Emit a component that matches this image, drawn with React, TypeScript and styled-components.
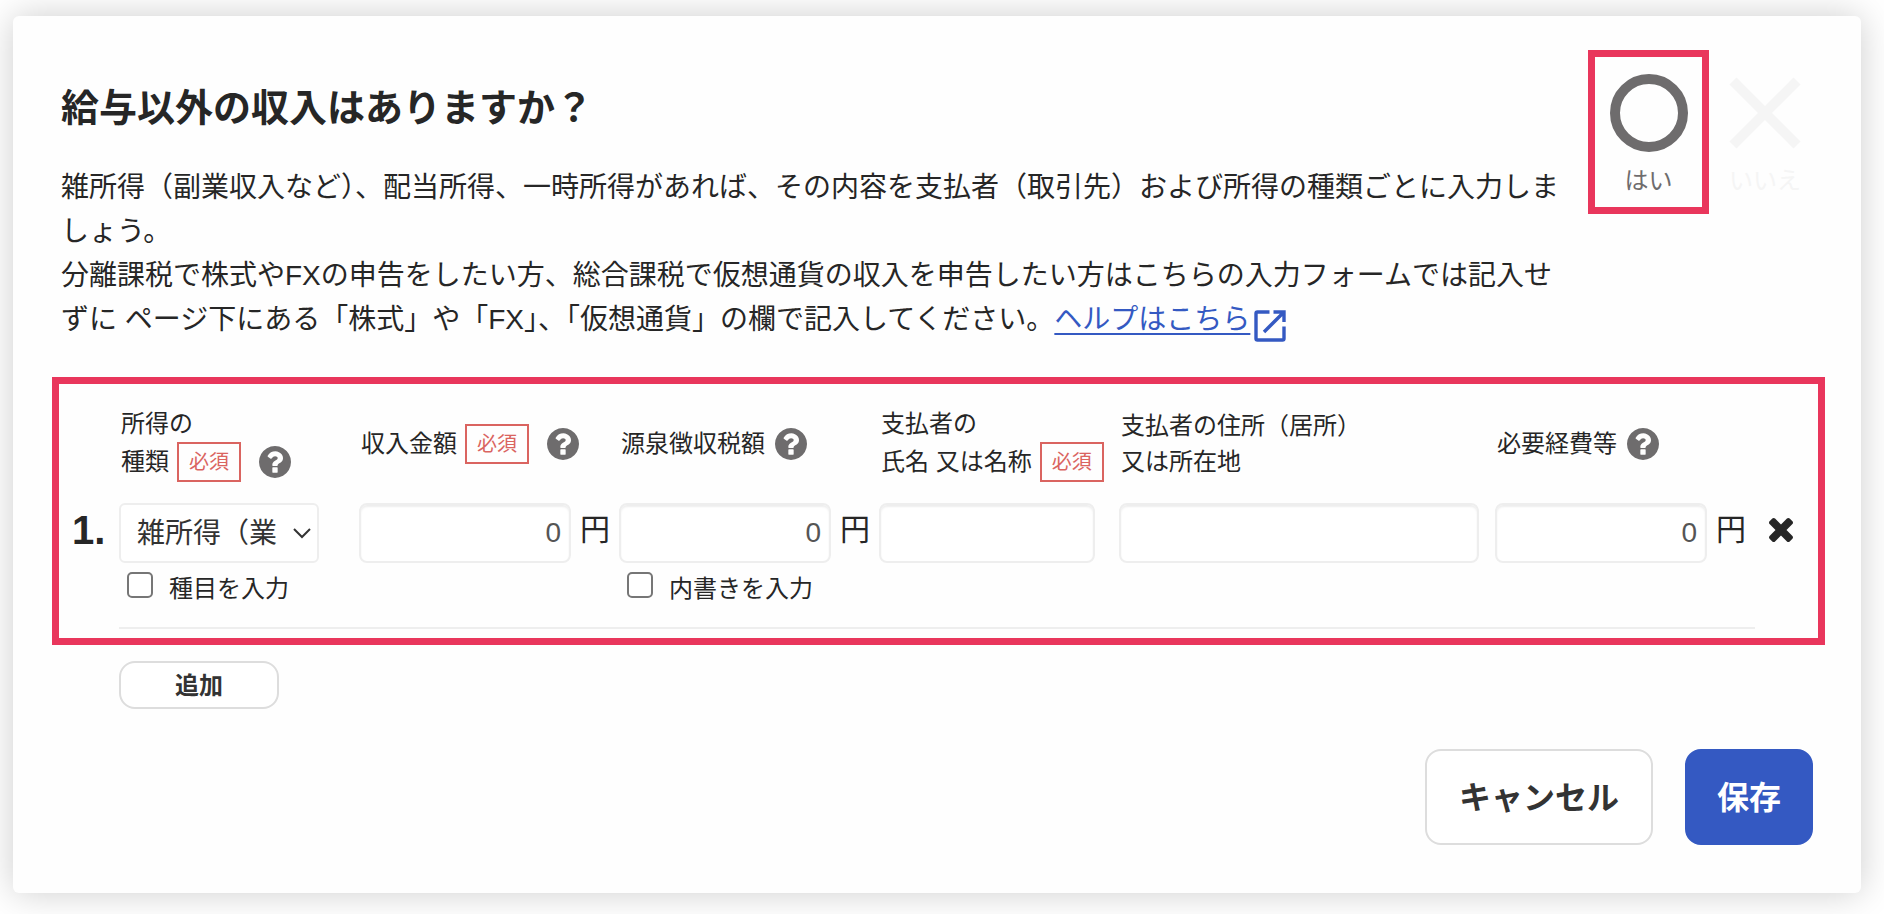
import React, { useState } from "react";
import styled, { createGlobalStyle, css } from "styled-components";

const color = {
  text: "#262626",
  control: "#333333",
  value: "#555555",
  muted: "#6e6c6d",
  faint: "#f5f5f5",
  line: "#eeeeee",
  buttonLine: "#dddddd",
  primary: "#3459c2",
  required: "#da6460",
  highlight: "#e9365c",
};

const fontStack = `"Liberation Sans", "Noto Sans CJK JP", sans-serif`;

const GlobalStyle = createGlobalStyle`
  *, *::before, *::after { box-sizing: border-box; }
  body {
    margin: 0;
    background: #ffffff;
    color: ${color.text};
    font-family: ${fontStack};
  }
  button, input, select { font-family: inherit; }
`;

const Page = styled.main`
  padding: 16px 23px 22px 13px;
`;

const Card = styled.form`
  padding: 34px 36px 48px 39px;
  border-radius: 6px;
  background: #fefefe;
  box-shadow: 0 0 36px rgba(0, 0, 0, 0.2);
`;

const Header = styled.header`
  display: flex;
  align-items: flex-start;
  padding-left: 9px;
`;

const Intro = styled.div`
  flex: 1;
  min-width: 0;
  padding-top: 34px;
  margin-right: 24px;
`;

const Title = styled.h1`
  margin: 0 0 34px;
  font-size: 38px;
  line-height: 48px;
  font-weight: 700;
`;

const Description = styled.p`
  margin: 0;
  font-size: 28px;
  line-height: 44px;
`;

const HelpLink = styled.a`
  color: ${color.primary};
  text-decoration-thickness: 2px;
  text-underline-offset: 4px;
`;

const ExternalIcon = styled.svg`
  width: 32px;
  height: 32px;
  margin-left: 4px;
  vertical-align: bottom;
`;

const Choices = styled.div`
  display: flex;
  margin-right: 4px;
`;

const Choice = styled.button<{ $active: boolean }>`
  display: flex;
  flex-direction: column;
  align-items: center;
  gap: 11px;
  width: ${(p) => (p.$active ? 121 : 112)}px;
  height: 164px;
  padding: 17px 0 8px;
  border: solid ${(p) => (p.$active ? color.highlight : "transparent")};
  border-width: ${(p) => (p.$active ? "7px" : "7px 0")};
  background: none;
  color: ${(p) => (p.$active ? color.muted : color.faint)};
  font-size: 24px;
  line-height: 36px;
  cursor: pointer;

  svg {
    width: 78px;
    height: 78px;
    fill: none;
    stroke: currentColor;
    stroke-width: 10;
  }
`;

const Entries = styled.section`
  margin-top: 35px;
  padding: 22px 0 9px;
  border: 7px solid ${color.highlight};
`;

const columns = css`
  display: grid;
  grid-template-columns: 60px 240px 260px 260px 240px minmax(0, 1fr) 260px 63px;
`;

const HeadRow = styled.div`
  ${columns}
  align-items: center;
  min-height: 76px;
  margin-bottom: 21px;
`;

const FieldRow = styled.div`
  ${columns}
  align-items: start;
`;

const HeadCell = styled.div`
  padding-left: 2px;
  font-size: 24px;
  line-height: 36px;
  white-space: nowrap;
`;

const HeadLine = styled.div`
  display: flex;
  align-items: center;
`;

const Required = styled.span`
  width: 64px;
  height: 40px;
  margin-left: 8px;
  border: 2px solid ${color.required};
  color: ${color.required};
  font-size: 20px;
  line-height: 36px;
  text-align: center;
`;

const HelpButton = styled.button<{ $gap: number }>`
  display: flex;
  margin-left: ${(p) => p.$gap}px;
  padding: 0;
  border: 0;
  background: none;
  color: ${color.muted};
  cursor: pointer;

  svg {
    width: 32px;
    height: 32px;
    fill: currentColor;
  }
`;

const RowNumber = styled.strong`
  padding-left: 13px;
  font-size: 40px;
  line-height: 54px;
`;

const FieldCell = styled.div`
  display: flex;
  flex-direction: column;
  gap: 8px;
`;

const FieldLine = styled.div`
  display: flex;
  align-items: flex-start;
`;

const SelectWrap = styled.div`
  position: relative;
  width: 200px;

  svg {
    position: absolute;
    top: 22px;
    right: 8px;
    width: 18px;
    height: 16px;
    fill: none;
    stroke: ${color.control};
    stroke-width: 2;
    pointer-events: none;
  }
`;

const Select = styled.select`
  width: 100%;
  height: 60px;
  padding: 0 36px 0 16px;
  border: 2px solid ${color.line};
  border-radius: 6px;
  background: #ffffff;
  color: ${color.control};
  font-size: 28px;
  appearance: none;
`;

const TextInput = styled.input<{ $width: string }>`
  width: ${(p) => p.$width};
  height: 60px;
  padding: 0 8px;
  border: 2px solid ${color.line};
  border-radius: 8px;
  background: #ffffff;
  box-shadow: inset 0 2px 2px ${color.line};
  color: ${color.value};
  font-size: 28px;
  outline: none;
`;

const AmountInput = styled(TextInput)`
  text-align: right;
`;

const Unit = styled.span`
  margin-left: 9px;
  font-size: 30px;
  line-height: 54px;
`;

const CheckLabel = styled.label`
  display: flex;
  align-items: center;
  gap: 16px;
  padding-left: 8px;
  font-size: 24px;
  line-height: 36px;
`;

const Checkbox = styled.input`
  appearance: none;
  width: 26px;
  height: 26px;
  margin: 0 0 8px;
  border: 2px solid #767676;
  border-radius: 5px;
  background: #ffffff;

  &:checked {
    background: ${color.primary};
  }
`;

const RemoveButton = styled.button`
  display: flex;
  align-items: center;
  height: 54px;
  padding: 0 0 0 14px;
  border: 0;
  background: none;
  color: ${color.text};
  cursor: pointer;

  svg {
    width: 24px;
    height: 24px;
    fill: currentColor;
  }
`;

const Divider = styled.hr`
  height: 2px;
  margin: 20px 63px 0 60px;
  border: 0;
  background: ${color.line};
`;

const Button = styled.button<{ $size: "small" | "large"; $primary?: boolean }>`
  height: ${(p) => (p.$size === "large" ? 96 : 48)}px;
  min-width: ${(p) => (p.$size === "large" ? 128 : 160)}px;
  padding: 0 ${(p) => (p.$size === "large" && !p.$primary ? 32 : 16)}px 4px;
  border: 2px solid ${(p) => (p.$primary ? color.primary : color.buttonLine)};
  border-radius: 16px;
  background: ${(p) => (p.$primary ? color.primary : "#ffffff")};
  color: ${(p) => (p.$primary ? "#ffffff" : color.control)};
  font-size: ${(p) => (p.$size === "large" ? 32 : 24)}px;
  font-weight: 700;
  cursor: pointer;
`;

const AddBar = styled.div`
  padding: 16px 0 0 67px;
`;

const Footer = styled.footer`
  display: flex;
  justify-content: flex-end;
  gap: 32px;
  margin-top: 40px;
  padding-right: 12px;
`;

const Help = ({ about, gap = 10 }: { about: string; gap?: number }) => (
  <HelpButton type="button" aria-label={about} $gap={gap}>
    <svg viewBox="128 128 1536 1536" aria-hidden="true">
      <path d="M1024 1376v-192q0-14-9-23t-23-9h-192q-14 0-23 9t-9 23v192q0 14 9 23t23 9h192q14 0 23-9t9-23zM1280 704q0-88-55.5-163t-138.5-116-170-41q-243 0-371 213-15 24 8 42l132 100q7 6 19 6 16 0 25-12 53-68 86-92 34-24 86-24 48 0 85.5 26t37.5 59q0 38-20 61t-68 45q-63 28-115.5 86.5t-52.5 125.5v36q0 14 9 23t23 9h192q14 0 23-9t9-23q0-19 21.5-49.5t54.5-49.5q32-18 49-28.5t46-35 44.5-48 28-60.5 12.5-81zM1664 896q0 209-103 385.5t-279.5 279.5-385.5 103-385.5-103-279.5-279.5-103-385.5 103-385.5 279.5-279.5 385.5-103 385.5 103 279.5 279.5 103 385.5z" />
    </svg>
  </HelpButton>
);

export default function App() {
  const [hasIncome, setHasIncome] = useState(true);

  return (
    <>
      <GlobalStyle />
      <Page>
        <Card onSubmit={(e) => e.preventDefault()}>
          <Header>
            <Intro>
              <Title>給与以外の収入はありますか？</Title>
              <Description lang="ja">
                雑所得（副業収入など）、配当所得、一時所得があれば、その内容を支払者（取引先）および所得の種類ごとに入力しましょう。
                <br />
                分離課税で株式やFXの申告をしたい方、総合課税で仮想通貨の収入を申告したい方はこちらの入力フォームでは記入せずに
                {" "}ページ下にある「株式」や「FX」、「仮想通貨」の欄で記入してください。
                <HelpLink href="#help">ヘルプはこちら</HelpLink>
                <ExternalIcon viewBox="0 0 32 32" aria-hidden="true" fill="none" stroke={color.primary} strokeWidth="3.4">
                  <path d="M15.500 2H3.500Q2 2 2 3.500V28.500Q2 30 3.500 30H28.500Q30 30 30 28.500V16.500" />
                  <path d="M19.500 2H30V12M29.500 2.500L10 22" />
                </ExternalIcon>
              </Description>
            </Intro>
            <Choices>
              <Choice type="button" $active={hasIncome} aria-pressed={hasIncome} onClick={() => setHasIncome(true)}>
                <svg viewBox="0 0 78 78" aria-hidden="true">
                  <circle cx="39" cy="39" r="34" />
                </svg>
                はい
              </Choice>
              <Choice type="button" $active={!hasIncome} aria-pressed={!hasIncome} onClick={() => setHasIncome(false)}>
                <svg viewBox="0 0 78 78" aria-hidden="true">
                  <path d="M7 7L71 71M71 7L7 71" />
                </svg>
                いいえ
              </Choice>
            </Choices>
          </Header>

          <Entries>
            <HeadRow>
              <span />
              <HeadCell>
                <label htmlFor="kind">所得の</label>
                <HeadLine>
                  <label htmlFor="kind">種類</label>
                  <Required>必須</Required>
                  <Help about="所得の種類" gap={18} />
                </HeadLine>
              </HeadCell>
              <HeadCell>
                <HeadLine>
                  <label htmlFor="amount">収入金額</label>
                  <Required>必須</Required>
                  <Help about="収入金額" gap={18} />
                </HeadLine>
              </HeadCell>
              <HeadCell>
                <HeadLine>
                  <label htmlFor="tax">源泉徴収税額</label>
                  <Help about="源泉徴収税額" />
                </HeadLine>
              </HeadCell>
              <HeadCell>
                <label htmlFor="payer">支払者の</label>
                <HeadLine>
                  <label htmlFor="payer">氏名 又は名称</label>
                  <Required>必須</Required>
                </HeadLine>
              </HeadCell>
              <HeadCell>
                <label htmlFor="address">
                  支払者の住所（居所）
                  <br />
                  又は所在地
                </label>
              </HeadCell>
              <HeadCell>
                <HeadLine>
                  <label htmlFor="expense">必要経費等</label>
                  <Help about="必要経費等" />
                </HeadLine>
              </HeadCell>
            </HeadRow>

            <FieldRow>
              <RowNumber>1.</RowNumber>
              <FieldCell>
                <SelectWrap>
                  <Select id="kind">
                    <option>雑所得（業</option>
                  </Select>
                  <svg viewBox="0 0 18 16" aria-hidden="true">
                    <path d="M1 4L9 12L17 4" />
                  </svg>
                </SelectWrap>
                <CheckLabel>
                  <Checkbox type="checkbox" />
                  種目を入力
                </CheckLabel>
              </FieldCell>
              <FieldLine>
                <AmountInput id="amount" $width="212px" inputMode="numeric" defaultValue="0" />
                <Unit>円</Unit>
              </FieldLine>
              <FieldCell>
                <FieldLine>
                  <AmountInput id="tax" $width="212px" inputMode="numeric" defaultValue="0" />
                  <Unit>円</Unit>
                </FieldLine>
                <CheckLabel>
                  <Checkbox type="checkbox" />
                  内書きを入力
                </CheckLabel>
              </FieldCell>
              <TextInput id="payer" $width="216px" />
              <TextInput id="address" $width="calc(100% - 16px)" />
              <FieldLine>
                <AmountInput id="expense" $width="212px" inputMode="numeric" defaultValue="0" />
                <Unit>円</Unit>
              </FieldLine>
              <RemoveButton type="button" aria-label="削除">
                <svg viewBox="302 366 1188 1188" aria-hidden="true">
                  <path d="M1490 1322q0 40-28 68l-136 136q-28 28-68 28t-68-28l-294-294-294 294q-28 28-68 28t-68-28l-136-136q-28-28-28-68t28-68l294-294-294-294q-28-28-28-68t28-68l136-136q28-28 68-28t68 28l294 294 294-294q28-28 68-28t68 28l136 136q28 28 28 68t-28 68l-294 294 294 294q28 28 28 68z" />
                </svg>
              </RemoveButton>
            </FieldRow>
            <Divider />
          </Entries>

          <AddBar>
            <Button type="button" $size="small">追加</Button>
          </AddBar>
          <Footer>
            <Button type="button" $size="large">キャンセル</Button>
            <Button type="submit" $size="large" $primary>保存</Button>
          </Footer>
        </Card>
      </Page>
    </>
  );
}
